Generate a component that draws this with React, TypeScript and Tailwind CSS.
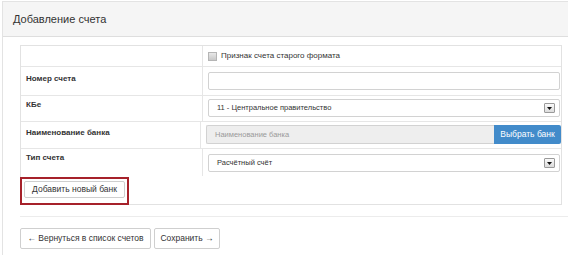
import React from "react";

function SelectArrow() {
  return (
    <span className="flex h-[10px] w-[11px] items-center justify-center rounded-[1px] border border-[#9a9a9a] bg-gradient-to-b from-[#fafafa] to-[#dcdcdc]">
      <svg width="5" height="3" viewBox="0 0 5 3">
        <path d="M0 0 L5 0 L2.5 3 Z" fill="#111" />
      </svg>
    </span>
  );
}

export default function App() {
  return (
    <div
      className="h-[255px] w-[568px] overflow-hidden bg-white text-[#333]"
      style={{ fontFamily: '"Liberation Sans", Arial, sans-serif' }}
    >
      <div className="ml-[2px] mt-[1px] flex h-[254px] flex-col border-l border-t border-[#e3e3e3]">
        <div className="flex h-[35px] items-center whitespace-nowrap border-b border-[#dedede] bg-[#f5f5f5] pl-[10px] text-[11px] text-[#333]">
          Добавление счета
        </div>
        <div className="flex flex-col pl-[17px] pt-[8px]">
          <div className="flex w-[542px] flex-col border border-[#e2e2e2]">
            {/* row 1 */}
            <div className="flex h-[21px] border-b border-[#e6e6e6]">
              <div className="w-[182px] border-r border-[#e6e6e6]" />
              <div className="flex items-center gap-[4px] whitespace-nowrap pl-[5px] text-[8px]">
                <span className="h-[9px] w-[9px] border border-[#b5b5b5] bg-gradient-to-b from-[#e8e8e8] to-[#c8c8c8]" />
                <span>Признак счета старого формата</span>
              </div>
            </div>
            {/* row 2 */}
            <div className="flex h-[29px] border-b border-[#e6e6e6]">
              <div className="w-[182px] whitespace-nowrap border-r border-[#e6e6e6] pl-[5px] pt-[6px] text-[8px] font-bold">
                Номер счета
              </div>
              <div className="flex flex-1 items-start pl-[5px] pt-[5px]">
                <div className="h-[18px] w-[352px] rounded-[2px] border border-[#d2d2d2] bg-white" />
              </div>
            </div>
            {/* row 3 */}
            <div className="flex h-[26px] border-b border-[#e6e6e6]">
              <div className="w-[182px] whitespace-nowrap border-r border-[#e6e6e6] pl-[5px] pt-[3px] text-[8px] font-bold">
                КБе
              </div>
              <div className="flex flex-1 items-start pl-[5px] pt-[3px]">
                <div className="flex h-[18px] w-[352px] items-center justify-between whitespace-nowrap rounded-[2px] border border-[#d2d2d2] bg-white pl-[8px] pr-[4px] text-[7.5px]">
                  <span>11 - Центральное правительство</span>
                  <SelectArrow />
                </div>
              </div>
            </div>
            {/* row 4 */}
            <div className="flex h-[27px] border-b border-[#e6e6e6]">
              <div className="w-[182px] whitespace-nowrap border-r border-[#e6e6e6] pl-[5px] pt-[5px] text-[8px] font-bold">
                Наименование банка
              </div>
              <div className="flex flex-1 items-start pl-[5px] pt-[3px]">
                <div className="flex h-[19px] w-[288px] items-center whitespace-nowrap rounded-l-[2px] border border-r-0 border-[#d2d2d2] bg-[#eeeeee] pl-[8px] text-[7.5px] text-[#9a9a9a]">
                  Наименование банка
                </div>
                <div className="flex h-[19px] w-[67px] items-center justify-center whitespace-nowrap rounded-r-[2px] bg-[#428bca] text-[8.5px] text-white">
                  Выбрать банк
                </div>
              </div>
            </div>
            {/* row 5 */}
            <div className="flex h-[27px]">
              <div className="w-[182px] whitespace-nowrap border-r border-[#e6e6e6] pl-[5px] pt-[3px] text-[8px] font-bold">
                Тип счета
              </div>
              <div className="flex flex-1 items-start pl-[5px] pt-[5px]">
                <div className="flex h-[18px] w-[352px] items-center justify-between whitespace-nowrap rounded-[2px] border border-[#d2d2d2] bg-white pl-[8px] pr-[4px] text-[7.5px]">
                  <span>Расчётный счёт</span>
                  <SelectArrow />
                </div>
              </div>
            </div>
            {/* button row */}
            <div className="relative flex h-[28px] items-start pl-[3px] pt-[5px]">
              <div className="flex h-[17px] w-[101px] items-center justify-center whitespace-nowrap rounded-[2px] border border-[#cfcfcf] bg-white text-[8.5px] text-[#333]">
                Добавить новый банк
              </div>
              <div className="pointer-events-none absolute left-[-1px] top-[1px] h-[28px] w-[109px] border-2 border-[#a6212a]" />
            </div>
          </div>
          <div className="mt-[11px] h-px w-[548px] bg-[#ececec]" />
          <div className="mt-[11px] flex gap-[3px]">
            <div className="flex h-[21px] w-[131px] items-center justify-center whitespace-nowrap rounded-[2px] border border-[#cfcfcf] bg-white text-[8.5px] text-[#333]">
              ← Вернуться в список счетов
            </div>
            <div className="flex h-[21px] w-[66px] items-center justify-center whitespace-nowrap rounded-[2px] border border-[#cfcfcf] bg-white text-[8.5px] text-[#333]">
              Сохранить →
            </div>
          </div>
        </div>
      </div>
    </div>
  );
}
